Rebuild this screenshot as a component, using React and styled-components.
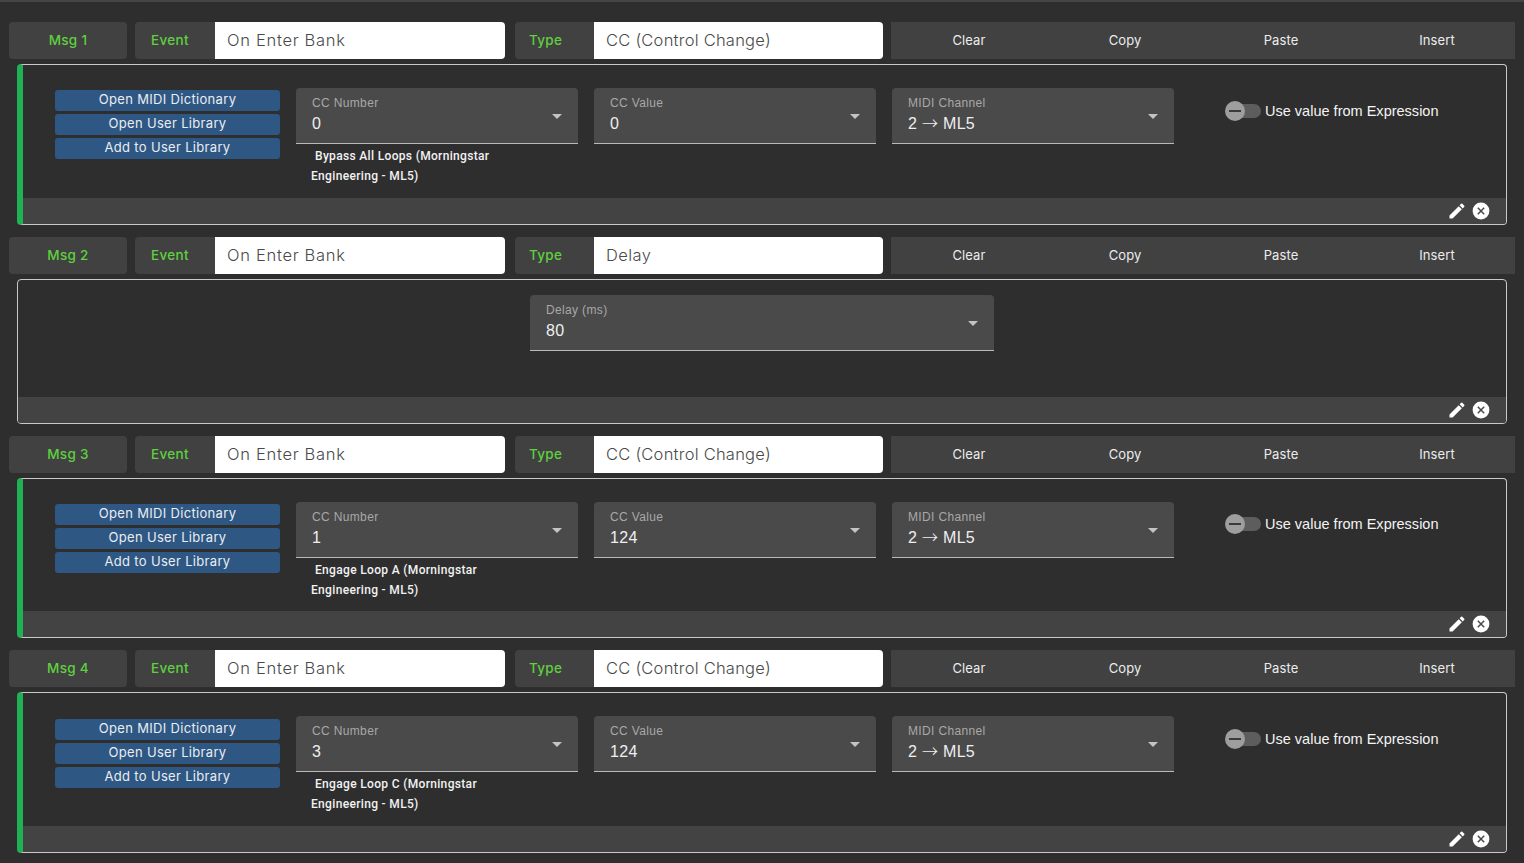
import React from "react";
import styled, { createGlobalStyle } from "styled-components";
import { MdEdit } from "react-icons/md";

const GlobalStyle = createGlobalStyle`
  html, body {
    margin: 0;
    padding: 0;
    background: #2e2e2e;
  }
`;

const Page = styled.div`
  height: 863px;
  overflow: hidden;
  padding: 20px 9px 0;
  box-sizing: border-box;
  border-top: 2px solid #454545;
  font-family: Inter, "Liberation Sans", sans-serif;
`;

const Group = styled.section`
  margin-bottom: 12px;
`;

const HeaderRow = styled.div`
  display: flex;
  height: 37px;
  margin-bottom: 5px;
`;

const Cell = styled.div`
  display: flex;
  align-items: center;
  background: #414141;
  color: #5fd03f;
  font-size: 13.5px;
  font-weight: 500;
  letter-spacing: 0.3px;
  box-sizing: border-box;
  padding-bottom: 1px;
`;

const MsgCell = styled(Cell)`
  width: 118px;
  margin-right: 8px;
  border-radius: 4px;
  justify-content: center;
`;

const InputLabel = styled(Cell)`
  width: ${({ $width }) => $width}px;
  padding-left: ${({ $inset }) => $inset}px;
  border-radius: 4px 0 0 4px;
`;

const InputBox = styled.div`
  width: ${({ $width }) => $width}px;
  margin-right: ${({ $gap }) => $gap}px;
  background: #fff;
  border-radius: 0 4px 4px 0;
  padding: 0 0 1px 12px;
  box-sizing: border-box;
  display: flex;
  align-items: center;
  color: #4a4a4a;
  font-size: 16.5px;
  letter-spacing: ${({ $tracking }) => $tracking}px;
  font-weight: 300;
`;

const Actions = styled.div`
  flex: none;
  width: 624px;
  display: grid;
  grid-template-columns: repeat(4, 1fr);
  background: #414141;
`;

const ActionButton = styled.div`
  display: flex;
  align-items: center;
  justify-content: center;
  padding-bottom: 1px;
  color: #ececec;
  font-size: 13px;
  letter-spacing: 0.1px;
`;

const Panel = styled.div`
  margin: 0 8px;
  height: ${({ $height }) => $height}px;
  box-sizing: border-box;
  display: flex;
  flex-direction: column;
  border: 1px solid #c9c9c9;
  border-left: ${({ $accent }) => ($accent ? "6px solid #1fb254" : "1px solid #c9c9c9")};
  border-radius: 4px;
  overflow: hidden;
`;

const PanelBody = styled.div`
  flex: 1;
  display: flex;
  align-items: flex-start;
  padding: 23px 0 0 32px;
`;

const DelayBody = styled(PanelBody)`
  justify-content: center;
  padding: 15px 0 0;
`;

const PanelFooter = styled.div`
  height: 26px;
  flex: none;
  background: #434343;
  display: flex;
  align-items: center;
  justify-content: flex-end;
  gap: 4px;
  padding-right: 15px;
  color: #fff;
  font-size: 20px;
`;

const LibraryColumn = styled.div`
  width: 225px;
  margin: 2.4px 16px 0 0;
  display: flex;
  flex-direction: column;
  gap: 3px;
`;

const LibraryButton = styled.div`
  height: 21px;
  border-radius: 3px;
  background: #2f5783;
  color: #e9edf2;
  font-size: 13px;
  letter-spacing: 0.32px;
  line-height: 19px;
  text-align: center;
`;

const FieldColumn = styled.div`
  width: 282px;
  margin-right: 16px;
`;

const Select = styled.div`
  position: relative;
  width: ${({ $width }) => $width || 282}px;
  height: 56px;
  box-sizing: border-box;
  background: #4a4a4a;
  border-bottom: 1px solid #b9b9b9;
  border-radius: 4px 4px 0 0;
  padding: 8px 16px 0;
  font-family: "Liberation Sans", Roboto, sans-serif;
`;

const SelectLabel = styled.div`
  color: #a8a8a8;
  font-size: 12px;
  line-height: 14px;
  letter-spacing: 0.35px;
`;

const SelectValue = styled.div`
  color: #efefef;
  font-size: 16px;
  line-height: 20px;
  margin-top: 4px;
  letter-spacing: 0.3px;
`;

const Arrow = styled.span`
  font-family: "Noto Sans CJK JP", sans-serif;
  font-weight: 300;
  line-height: 1;
`;

const Caret = styled.span`
  position: absolute;
  right: 16px;
  top: 26px;
  border-left: 5px solid transparent;
  border-right: 5px solid transparent;
  border-top: 5px solid #c4c4c4;
`;

const Caption = styled.div`
  width: 200px;
  margin: 2px 0 0 15px;
  color: #f2f2f2;
  font-family: Roboto, "Liberation Sans", sans-serif;
  font-weight: 500;
  font-size: 12px;
  line-height: 20px;
  letter-spacing: 0.33px;
  text-indent: 4px;
`;

const ExpressionToggle = styled.div`
  display: flex;
  align-items: center;
  margin: 14.6px 0 0 35px;
  color: #f4f4f4;
  font-family: "Liberation Sans", Arial, sans-serif;
  font-size: 14.5px;
  letter-spacing: 0.01px;
`;

const Track = styled.span`
  position: relative;
  display: block;
  width: 34px;
  height: 14px;
  margin: 0 4px 0 2px;
  border-radius: 7px;
  background: #5d5d5d;
`;

const Thumb = styled.span`
  position: absolute;
  left: -2px;
  top: -3px;
  width: 20px;
  height: 20px;
  border-radius: 50%;
  background: #9e9e9e;

  &::after {
    content: "";
    position: absolute;
    left: 4px;
    right: 4px;
    top: 9px;
    height: 2px;
    background: #3a3a3a;
  }
`;

const messages = [
  { name: "Msg 1", type: "CC (Control Change)", number: "0", value: "0", caption: "Bypass All Loops (Morningstar Engineering - ML5)" },
  { name: "Msg 2", type: "Delay", delay: "80" },
  { name: "Msg 3", type: "CC (Control Change)", number: "1", value: "124", caption: "Engage Loop A (Morningstar Engineering - ML5)" },
  { name: "Msg 4", type: "CC (Control Change)", number: "3", value: "124", caption: "Engage Loop C (Morningstar Engineering - ML5)" },
];

function Field({ label, value, width }) {
  return (
    <Select $width={width}>
      <SelectLabel>{label}</SelectLabel>
      <SelectValue>{value}</SelectValue>
      <Caret />
    </Select>
  );
}

function CloseIcon() {
  return (
    <svg width="20" height="20" viewBox="0 0 20 20">
      <circle cx="10" cy="10" r="8.4" fill="#fff" />
      <path d="M6.8 6.8l6.4 6.4M13.2 6.8l-6.4 6.4" stroke="#4a4a4a" strokeWidth="1.5" />
    </svg>
  );
}

function Footer() {
  return (
    <PanelFooter>
      <MdEdit />
      <CloseIcon />
    </PanelFooter>
  );
}

function Message({ msg }) {
  return (
    <Group>
      <HeaderRow>
        <MsgCell>{msg.name}</MsgCell>
        <InputLabel $width={80} $inset={16}>Event</InputLabel>
        <InputBox $width={290} $gap={10} $tracking={0.7}>On Enter Bank</InputBox>
        <InputLabel $width={79} $inset={14}>Type</InputLabel>
        <InputBox $width={289} $gap={8} $tracking={msg.delay ? 0.4 : 0.24}>{msg.type}</InputBox>
        <Actions>
          {["Clear", "Copy", "Paste", "Insert"].map((a) => (
            <ActionButton key={a}>{a}</ActionButton>
          ))}
        </Actions>
      </HeaderRow>
      {msg.delay ? (
        <Panel $height={145}>
          <DelayBody>
            <Field label="Delay (ms)" value={msg.delay} width={464} />
          </DelayBody>
          <Footer />
        </Panel>
      ) : (
        <Panel $height={160.6} $accent>
          <PanelBody>
            <LibraryColumn>
              <LibraryButton>Open MIDI Dictionary</LibraryButton>
              <LibraryButton>Open User Library</LibraryButton>
              <LibraryButton>Add to User Library</LibraryButton>
            </LibraryColumn>
            <FieldColumn>
              <Field label="CC Number" value={msg.number} />
              <Caption>{msg.caption}</Caption>
            </FieldColumn>
            <FieldColumn>
              <Field label="CC Value" value={msg.value} />
            </FieldColumn>
            <FieldColumn>
              <Field label="MIDI Channel" value={<>2 <Arrow>→</Arrow> ML5</>} />
            </FieldColumn>
            <ExpressionToggle>
              <Track>
                <Thumb />
              </Track>
              Use value from Expression
            </ExpressionToggle>
          </PanelBody>
          <Footer />
        </Panel>
      )}
    </Group>
  );
}

export default function App() {
  return (
    <Page>
      <GlobalStyle />
      {messages.map((msg) => (
        <Message key={msg.name} msg={msg} />
      ))}
    </Page>
  );
}
